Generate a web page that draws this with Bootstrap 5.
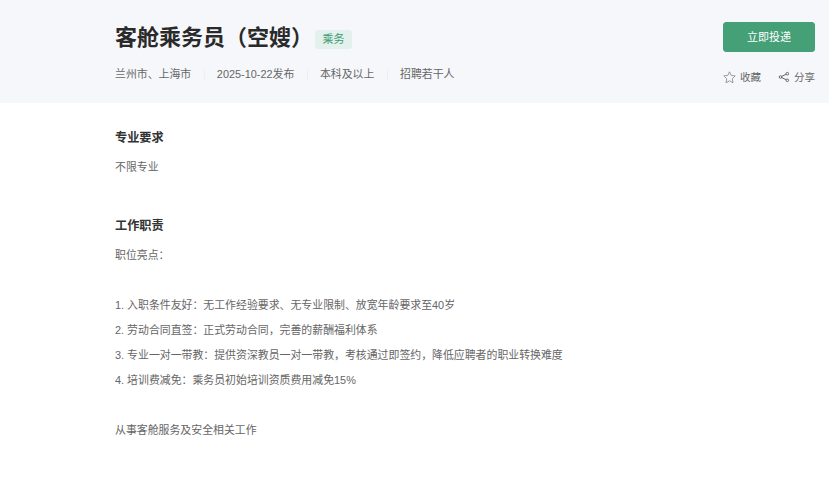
<!doctype html>
<html lang="zh-CN">
<head>
<meta charset="utf-8">
<title>客舱乘务员（空嫂）</title>
<link rel="stylesheet" href="https://cdn.jsdelivr.net/npm/bootstrap@5.3.0/dist/css/bootstrap.min.css">
<style>
html,body{height:479px;overflow:hidden;background:#fff}
body{font-family:"Liberation Sans","Noto Sans CJK SC",sans-serif;color:#333}
.job-head{width:829px;height:103px;background:#f5f7fb;padding:0 14px 0 115px}
.job-title{font-size:22px;line-height:30px;font-weight:700;color:#2a2a2a;margin:0}
.job-tag{font-size:11px;line-height:19px;height:19px;padding:0 7.5px;background:#e2f1ec;color:#3f9a72;border-radius:3px;margin-left:2px;margin-top:3px}
.title-row{padding-top:23px}
.meta-row{font-size:10.9px;line-height:16px;color:#666;margin-top:13px}
.meta-row span+span{margin-left:12.6px;padding-left:13px;position:relative}
.meta-row span+span::before{content:"";position:absolute;left:0;top:4px;height:9px;width:1px;background:#eceef2}
.apply-btn{width:92px;height:30px;background:#45a077;border-color:#45a077;color:#fff;font-size:11px;padding:0;line-height:28px;border-radius:3px;margin-top:22px}
.act-row{font-size:10.5px;line-height:14px;color:#666;margin-top:18px;gap:17px;justify-content:flex-end}
.act-row svg{display:block;margin-right:4px}
.job-body{padding:0 0 0 115px}
.sec-title{font-size:12.2px;line-height:18px;font-weight:700;color:#333;margin:0 0 13px}
.body-line{font-size:10.9px;line-height:15px;color:#666;margin:0;height:25px}
.first-sec{padding-top:26px}
.second-sec{padding-top:32px}
</style>
</head>
<body>
<div class="job-head d-flex justify-content-between">
  <div>
    <div class="title-row d-flex align-items-center">
      <h1 class="job-title">客舱乘务员（空嫂）</h1>
      <div class="job-tag">乘务</div>
    </div>
    <div class="meta-row d-flex"><span>兰州市、上海市</span><span>2025-10-22发布</span><span>本科及以上</span><span>招聘若干人</span></div>
  </div>
  <div>
    <button type="button" class="btn apply-btn d-block">立即投递</button>
    <div class="act-row d-flex">
      <div class="d-flex align-items-center"><svg width="13" height="13" viewBox="0 0 13 13" fill="none" stroke="#999" stroke-width="1"><path d="M6.500 .8 8.200 4.400 12.200 4.900 9.300 7.700 10 11.800 6.500 9.800 3 11.800 3.700 7.700 .8 4.900 4.800 4.400Z"/></svg>收藏</div>
      <div class="d-flex align-items-center"><svg width="12" height="12" viewBox="0 0 12 12" fill="none" stroke="#666" stroke-width="1"><circle cx="9.300" cy="2.700" r="1.300"/><circle cx="2.500" cy="6" r="1.300"/><circle cx="9.300" cy="9.300" r="1.300"/><path d="M3.700 5.400 8.100 3.300M3.700 6.600 8.100 8.700"/></svg>分享</div>
    </div>
  </div>
</div>
<div class="job-body">
  <section class="first-sec">
    <h2 class="sec-title">专业要求</h2>
    <p class="body-line">不限专业</p>
  </section>
  <section class="second-sec">
    <h2 class="sec-title">工作职责</h2>
    <p class="body-line">职位亮点：</p>
    <p class="body-line"></p>
    <p class="body-line">1. 入职条件友好：无工作经验要求、无专业限制、放宽年龄要求至40岁</p>
    <p class="body-line">2. 劳动合同直签：正式劳动合同，完善的薪酬福利体系</p>
    <p class="body-line">3. 专业一对一带教：提供资深教员一对一带教，考核通过即签约，降低应聘者的职业转换难度</p>
    <p class="body-line">4. 培训费减免：乘务员初始培训资质费用减免15%</p>
    <p class="body-line"></p>
    <p class="body-line">从事客舱服务及安全相关工作</p>
  </section>
</div>
<script src="https://cdn.jsdelivr.net/npm/bootstrap@5.3.0/dist/js/bootstrap.bundle.min.js"></script>
</body>
</html>
